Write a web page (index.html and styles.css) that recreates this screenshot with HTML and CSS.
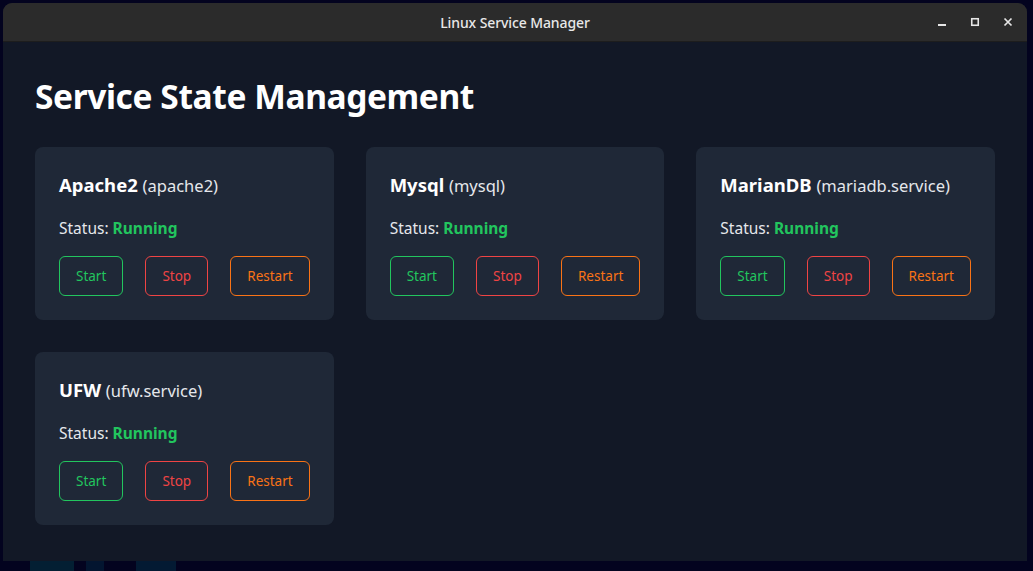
FILE: index.html
```html
<!DOCTYPE html>
<html lang="en">
<head>
<meta charset="utf-8">
<title>Linux Service Manager</title>
<link rel="stylesheet" href="styles.css">
</head>
<body>
<div class="desktop">
  <div class="wallpaper-shape shape-a"></div>
  <div class="wallpaper-shape shape-b"></div>
  <div class="wallpaper-shape shape-c"></div>
  <div class="window">
    <header class="titlebar">
      <span class="title">Linux Service Manager</span>
      <div class="controls">
        <svg class="ctl" width="10" height="10" viewBox="0 0 10 10"><rect x="1" y="7" width="8" height="2" fill="#e6e6e6"/></svg>
        <svg class="ctl" width="10" height="10" viewBox="0 0 10 10"><rect x="1.75" y="1.75" width="6.5" height="6.5" fill="none" stroke="#e6e6e6" stroke-width="1.6"/></svg>
        <svg class="ctl" width="10" height="10" viewBox="0 0 10 10"><path d="M1.5 1.5 L8.5 8.5 M8.5 1.5 L1.5 8.5" stroke="#e6e6e6" stroke-width="1.7"/></svg>
      </div>
    </header>
    <main class="content">
      <h1 class="page-title">Service State Management</h1>
      <div class="grid">
        <section class="card">
          <h3 class="card-title">Apache2 <span class="unit">(apache2)</span></h3>
          <p class="status">Status: <span class="running">Running</span></p>
          <div class="actions">
            <button class="btn btn-start">Start</button>
            <button class="btn btn-stop">Stop</button>
            <button class="btn btn-restart">Restart</button>
          </div>
        </section>
        <section class="card">
          <h3 class="card-title">Mysql <span class="unit">(mysql)</span></h3>
          <p class="status">Status: <span class="running">Running</span></p>
          <div class="actions">
            <button class="btn btn-start">Start</button>
            <button class="btn btn-stop">Stop</button>
            <button class="btn btn-restart">Restart</button>
          </div>
        </section>
        <section class="card">
          <h3 class="card-title">MarianDB <span class="unit">(mariadb.service)</span></h3>
          <p class="status">Status: <span class="running">Running</span></p>
          <div class="actions">
            <button class="btn btn-start">Start</button>
            <button class="btn btn-stop">Stop</button>
            <button class="btn btn-restart">Restart</button>
          </div>
        </section>
        <section class="card">
          <h3 class="card-title">UFW <span class="unit">(ufw.service)</span></h3>
          <p class="status">Status: <span class="running">Running</span></p>
          <div class="actions">
            <button class="btn btn-start">Start</button>
            <button class="btn btn-stop">Stop</button>
            <button class="btn btn-restart">Restart</button>
          </div>
        </section>
      </div>
    </main>
  </div>
</div>
</body>
</html>
```

FILE: styles.css
```css
* { box-sizing: border-box; }

html, body {
  margin: 0;
  padding: 0;
  height: 100%;
}

body {
  background: #03031f;
  font-family: "Noto Sans", "Open Sans", sans-serif;
  overflow: hidden;
}

.desktop {
  position: relative;
  width: 1033px;
  height: 571px;
  padding: 3px 6px 10px 3px;
  overflow: hidden;
}

.wallpaper-shape {
  position: absolute;
  bottom: 0;
  height: 12px;
}
.shape-a { left: 30px; width: 44px; background: #031f33; }
.shape-b { left: 86px; width: 18px; background: #031530; }
.shape-c { left: 136px; width: 40px; background: #031a33; }

.window {
  position: relative;
  width: 1024px;
  height: 558px;
  display: flex;
  flex-direction: column;
  border-radius: 9px 9px 0 0;
  overflow: hidden;
  background: #121826;
}

.titlebar {
  flex: 0 0 39px;
  background: #2b2b2b;
  display: flex;
  align-items: center;
  justify-content: center;
  position: relative;
  border-bottom: 1px solid #1d1d1d;
}

.title {
  color: #e8e8e8;
  font-size: 14px;
  font-weight: 500;
  letter-spacing: -0.1px;
}

.controls {
  position: absolute;
  right: 14px;
  top: 0;
  height: 100%;
  display: flex;
  align-items: center;
  gap: 23px;
}

.ctl { display: block; }

.content {
  flex: 1;
  padding: 32px 32px;
  background: #121826;
}

.page-title {
  margin: 0 0 28px;
  color: #ffffff;
  font-size: 33.5px;
  font-weight: 700;
  line-height: 45px;
  letter-spacing: -0.4px;
}

.grid {
  display: grid;
  grid-template-columns: repeat(3, 1fr);
  gap: 32px;
}

.card {
  background: #1f2837;
  border-radius: 8px;
  padding: 24px;
}

.card-title {
  margin: 0 0 16px;
  color: #ffffff;
  font-size: 18.5px;
  font-weight: 700;
  line-height: 28px;
}

.unit {
  font-weight: 400;
  font-size: 16.5px;
  color: #e5e7eb;
}

.status {
  margin: 0 0 16px;
  color: #e5e7eb;
  font-size: 15.5px;
  line-height: 24px;
}

.running {
  color: #22c55e;
  font-weight: 700;
}

.actions {
  display: flex;
  justify-content: space-between;
}

.btn {
  height: 40px;
  padding: 0 16px;
  background: transparent;
  border: 1px solid;
  border-radius: 6px;
  font-family: inherit;
  font-size: 13.5px;
  cursor: pointer;
}

.btn-start { color: #22c55e; border-color: #22c55e; }
.btn-stop { color: #ef4444; border-color: #ef4444; }
.btn-restart { color: #f97316; border-color: #f97316; }
```
